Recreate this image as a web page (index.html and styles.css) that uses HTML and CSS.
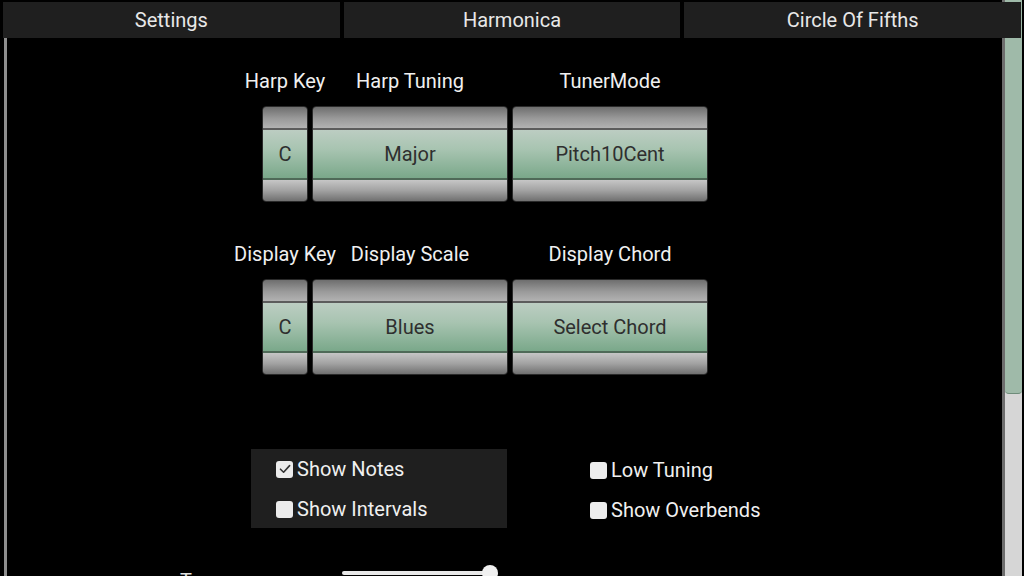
FILE: index.html
```html
<!DOCTYPE html>
<html>
<head>
<meta charset="utf-8">
<link rel="stylesheet" href="styles.css">
</head>
<body>
<div class="screen">
  <div class="scrollbar"><div class="thumb"></div></div>
  <nav class="tabs">
    <div class="tab">Settings</div>
    <div class="tab">Harmonica</div>
    <div class="tab">Circle Of Fifths</div>
  </nav>
  <main class="content">
    <section class="wheels">
      <div class="col narrow">
        <div class="label">Harp Key</div>
        <div class="wheel"><div class="cap top"></div><div class="val">C</div><div class="cap bottom"></div></div>
      </div>
      <div class="col">
        <div class="label">Harp Tuning</div>
        <div class="wheel"><div class="cap top"></div><div class="val">Major</div><div class="cap bottom"></div></div>
      </div>
      <div class="col">
        <div class="label">TunerMode</div>
        <div class="wheel"><div class="cap top"></div><div class="val">Pitch10Cent</div><div class="cap bottom"></div></div>
      </div>
    </section>
    <section class="wheels second">
      <div class="col narrow">
        <div class="label">Display Key</div>
        <div class="wheel"><div class="cap top"></div><div class="val">C</div><div class="cap bottom"></div></div>
      </div>
      <div class="col">
        <div class="label">Display Scale</div>
        <div class="wheel"><div class="cap top"></div><div class="val">Blues</div><div class="cap bottom"></div></div>
      </div>
      <div class="col">
        <div class="label">Display Chord</div>
        <div class="wheel"><div class="cap top"></div><div class="val">Select Chord</div><div class="cap bottom"></div></div>
      </div>
    </section>
    <section class="options">
      <div class="panel">
        <div class="check"><span class="box checked"><svg viewBox="0 0 16 16" width="16" height="16"><path d="M3.5 8.2 L6.6 11.2 L12.6 4.6" fill="none" stroke="#333" stroke-width="1.6" stroke-linecap="round" stroke-linejoin="round"/></svg></span>Show Notes</div>
        <div class="check"><span class="box"></span>Show Intervals</div>
      </div>
      <div class="group">
        <div class="check"><span class="box"></span>Low Tuning</div>
        <div class="check"><span class="box"></span>Show Overbends</div>
      </div>
    </section>
    <section class="slider-row">
      <div class="slabel">Transpose</div>
      <div class="slider"><div class="track"></div><div class="knob"></div></div>
    </section>
  </main>
</div>
</body>
</html>
```
FILE: styles.css
```css
* { box-sizing: border-box; }
html, body { margin: 0; padding: 0; background: #000; }
body { font-family: Roboto, "Liberation Sans", sans-serif; color: #ececec; }
.screen { position: relative; width: 1024px; height: 576px; overflow: hidden; background: #000; }

.scrollbar {
  position: absolute; top: 0; right: 2px; width: 20px; height: 576px;
  background: #d6d6d6; border-left: 3px solid #6d6d6d; z-index: 0;
}
.thumb {
  height: 394px; background: #9fbaa9;
  border-bottom: 1px solid #6e8c7a; border-radius: 0 0 4px 4px;
}

.tabs { position: relative; z-index: 1; display: flex; gap: 4px; padding: 2px 3px 0 3px; height: 38px; }
.tab {
  flex: 1; height: 36px; background: #1f1f1f; display: flex; align-items: center; justify-content: center;
  font-size: 20px; color: #e8e8e8;
}

.content {
  height: 538px; margin-left: 4px; border-left: 3px solid #8e8e8e;
  padding-top: 31px;
}

.wheels { display: flex; gap: 4px; margin-left: 255px; }
.wheels.second { margin-top: 40px; }
.col { width: 196px; display: flex; flex-direction: column; align-items: center; }
.col.narrow { width: 46px; }
.label { height: 24px; line-height: 24px; font-size: 20px; white-space: nowrap; color: #f0f0f0; margin-bottom: 13px; }

.wheel {
  width: 100%; height: 96px; border-radius: 4px; overflow: hidden;
  border: 1px solid #2a2a2a; display: flex; flex-direction: column;
}
.cap { flex: none; }
.cap.top { height: 23px; background: linear-gradient(#6e6e6e, #9a9a9a 55%, #b2b2b2); border-bottom: 2px solid #5c5c5c; }
.cap.bottom { height: 23px; background: linear-gradient(#c6c6c6, #a2a2a2 50%, #707070); border-top: 2px solid #4f6a58; }
.val {
  flex: 1; display: flex; align-items: center; justify-content: center;
  background: linear-gradient(#bccdc2, #a8c4b1 40%, #7aa88a);
  color: #2f2f2f; font-size: 20px; white-space: nowrap;
}

.options { display: flex; margin-top: 74px; margin-left: 244px; }
.panel { width: 256px; height: 79px; background: #1f1f1f; padding-left: 25px; }
.group { margin-left: 83px; padding-top: 1px; }
.check { height: 40px; display: flex; align-items: center; font-size: 20px; color: #f0f0f0; white-space: nowrap; }
.box { width: 17px; height: 17px; background: #ececec; border-radius: 3px; margin-right: 4px; display: flex; align-items: center; justify-content: center; }

.slider-row { display: flex; align-items: flex-start; margin-top: 37px; margin-left: 173px; }
.slabel { font-size: 20px; line-height: 24px; width: 162px; color: #e0e0e0; padding-top: 2px; }
.slider { position: relative; width: 160px; height: 20px; }
.track { position: absolute; left: 0; top: 4px; width: 150px; height: 4px; background: #e8e8e8; border-radius: 2px; }
.knob { position: absolute; left: 140px; top: -2px; width: 16px; height: 16px; border-radius: 50%; background: #f0f0f0; }
```
